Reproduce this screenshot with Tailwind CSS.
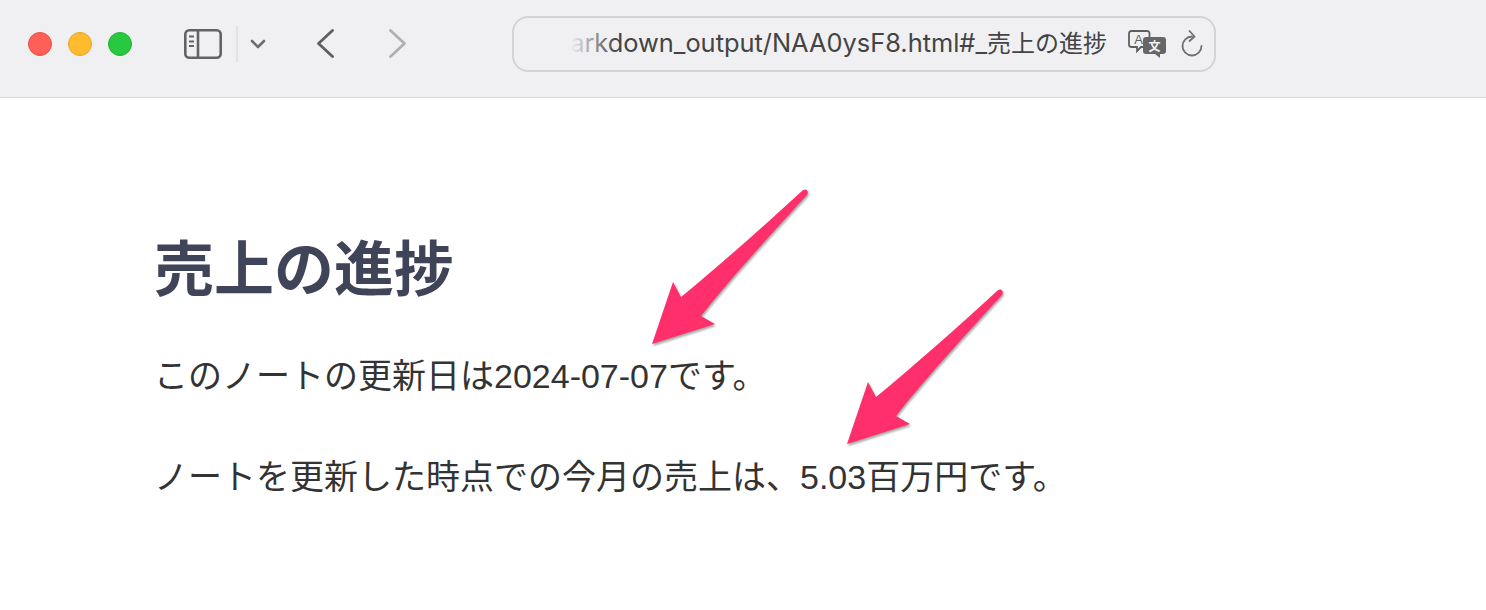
<!DOCTYPE html>
<html lang="ja">
<head>
    <meta charset="UTF-8">
    <title>売上の進捗</title>
    <script src="https://cdn.jsdelivr.net/npm/@tailwindcss/browser@4"></script>
</head>
<body class="bg-white overflow-hidden font-['Liberation_Sans','Noto_Sans_CJK_JP',sans-serif]">
    <div class="relative w-[1486px] h-[610px]">
        <!-- toolbar -->
        <header class="flex items-center h-[98px] pb-[10px] bg-[#f0f0f3] border-b border-[#d9d9d9]">
            <div class="flex gap-4 ml-[28px]">
                <span class="w-6 h-6 rounded-full bg-[#ff5f57] border border-[#e5504a]"></span>
                <span class="w-6 h-6 rounded-full bg-[#febc2e] border border-[#e3a526]"></span>
                <span class="w-6 h-6 rounded-full bg-[#28c840] border border-[#22b136]"></span>
            </div>
            <svg class="ml-[52px]" width="38" height="30" viewBox="0 0 38 30" fill="none" stroke="#636363" stroke-width="2.6">
                <rect x="1.300" y="1.300" width="35.400" height="27.400" rx="4"/>
                <path d="M14 1v28"/>
                <path d="M5 7.500h5M5 12.500h5M5 17h5" stroke-width="1.800"/>
            </svg>
            <span class="ml-[14px] w-[2px] h-9 bg-[#e2e2e4]"></span>
            <svg class="ml-[12px]" width="16" height="10" viewBox="0 0 16 10" fill="none" stroke="#6e6e6e" stroke-width="2.600" stroke-linecap="round" stroke-linejoin="round">
                <path d="M2 2l6 6 6-6"/>
            </svg>
            <svg class="ml-[50px]" width="20" height="30" viewBox="0 0 20 30" fill="none" stroke="#5f5f5f" stroke-width="2.800" stroke-linecap="round" stroke-linejoin="round">
                <path d="M16.500 1.500L2.500 14.500l14 13"/>
            </svg>
            <svg class="ml-[52px]" width="20" height="30" viewBox="0 0 20 30" fill="none" stroke="#b0b0b0" stroke-width="2.800" stroke-linecap="round" stroke-linejoin="round">
                <path d="M2.500 1.500l14 13-14 13"/>
            </svg>
            <!-- address bar -->
            <div class="relative flex items-center justify-end ml-[104px] w-[704px] h-14 pr-[11px] rounded-2xl border-2 border-[#d4d4d6] bg-[#f0f0f3]">
                <div class="relative w-[542px] overflow-hidden flex justify-end">
                    <span class="whitespace-nowrap text-[25.4px] leading-8 text-[#444] font-['Inter','Noto_Sans_CJK_JP',sans-serif]">markdown_output/NAA0ysF8.html#_<span class="text-[24px]">売上の進捗</span></span>
                    <span class="absolute left-0 top-0 w-[52px] h-full bg-gradient-to-r from-[#f0f0f3] from-10% to-transparent"></span>
                </div>
                <svg class="ml-[21px] shrink-0" width="38" height="28" viewBox="0 0 38 28">
                    <path d="M3.500 1h15.500a2.500 2.500 0 0 1 2.500 2.500v11a2.500 2.500 0 0 1-2.500 2.500h-6l-4 4v-4h-5.500a2.500 2.500 0 0 1-2.500-2.500v-11a2.500 2.500 0 0 1 2.500-2.500z" fill="none" stroke="#5f5f5f" stroke-width="1.800"/>
                    <text x="10.500" y="13.500" text-anchor="middle" font-size="13" fill="#5f5f5f" font-family="Liberation Sans">A</text>
                    <path d="M18 7h17a3 3 0 0 1 3 3v11a3 3 0 0 1-3 3h-3v4l-5-4h-9a3 3 0 0 1-3-3v-11a3 3 0 0 1 3-3z" fill="#666"/>
                    <text x="26.500" y="20.500" text-anchor="middle" font-size="12" font-weight="700" fill="#f0f0f3" font-family="Noto Sans CJK JP">文</text>
                </svg>
                <svg class="ml-[15px] shrink-0" width="22" height="27" viewBox="0 0 22 27" fill="none" stroke="#707070" stroke-width="1.800" stroke-linecap="round" stroke-linejoin="round">
                    <path d="M11 6.500a9.500 9.500 0 1 0 9.500 9.500"/>
                    <path d="M8.500 1l5 5.500-5 4.500"/>
                </svg>
            </div>
        </header>

        <!-- note body -->
        <main class="pl-[154px] pt-[139px]">
            <h1 class="text-[60px] leading-[68px] font-bold text-[#3f4459]">売上の進捗</h1>
            <p class="mt-[46px] text-[34px] leading-[50px] text-[#333]">このノートの更新日は2024-07-07です。</p>
            <p class="mt-[51px] text-[34px] leading-[50px] text-[#333]">ノートを更新した時点での今月の売上は、5.03百万円です。</p>
        </main>

        <!-- annotation arrows -->
        <svg class="absolute inset-0 drop-shadow-[1px_2px_1px_rgba(0,0,0,0.35)]" width="1486" height="610" viewBox="0 0 1486 610" fill="#ff2f6c">
            <path d="M802.500 190.500Q806 188.500 807.500 191Q808.500 193.500 806.500 195.500C770 235 725 285 701 316L715 324L652 344L673 282L681 297C720 265 765 225 802.500 190.500Z"/>
            <path transform="translate(195 100)" d="M802.500 190.500Q806 188.500 807.500 191Q808.500 193.500 806.500 195.500C770 235 725 285 701 316L715 324L652 344L673 282L681 297C720 265 765 225 802.500 190.500Z"/>
        </svg>
    </div>
</body>
</html>
